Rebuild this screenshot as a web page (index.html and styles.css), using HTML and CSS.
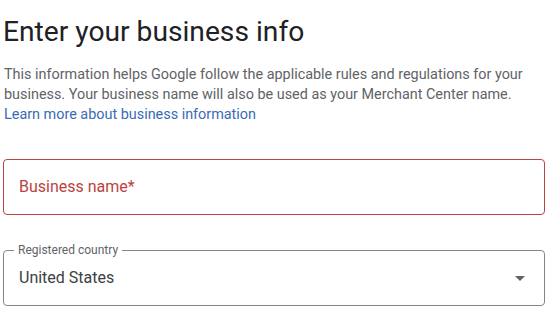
FILE: index.html
```html
<!DOCTYPE html>
<html lang="en">
<head>
<meta charset="utf-8">
<title>Enter your business info</title>
<link rel="stylesheet" href="styles.css">
</head>
<body>
<main class="page">
  <h1 class="title">Enter your business info</h1>
  <p class="intro">This information helps Google follow the applicable rules and regulations for your business. Your business name will also be used as your Merchant Center name. <a class="link" href="#">Learn more about business information</a></p>
  <div class="field field-error">
    <span class="field-label">Business name*</span>
  </div>
  <fieldset class="select">
    <legend class="select-legend">Registered country</legend>
    <div class="select-row">
      <span class="select-value">United States</span>
      <svg class="select-arrow" width="10" height="5" viewBox="0 0 10 5" aria-hidden="true"><path d="M0 0h10L5 5z" fill="#5f6368"/></svg>
    </div>
  </fieldset>
</main>
</body>
</html>
```

FILE: styles.css
```css
html, body {
  margin: 0;
  padding: 0;
  background: #ffffff;
}

.page {
  display: flex;
  flex-direction: column;
  padding: 0 2px 0 3px;
  font-family: Roboto, "Liberation Sans", sans-serif;
}

.title {
  margin: 14px 0 0 0;
  font-family: Roboto, "Liberation Sans", sans-serif;
  font-size: 28.2px;
  line-height: 36px;
  font-weight: 400;
  color: #202124;
}

.intro {
  margin: 15px 0 0 1px;
  font-size: 14.4px;
  line-height: 20px;
  color: #5f6368;
}

.link {
  display: block;
  color: #3a6bb5;
  text-decoration: none;
}

.field {
  margin-top: 34px;
  height: 56px;
  box-sizing: border-box;
  border: 1px solid #bb4340;
  border-radius: 4px;
  display: flex;
  align-items: center;
  padding: 0 15px;
}

.field-label {
  font-size: 16px;
  line-height: 24px;
  color: #bb4340;
}

.select {
  margin: 27px 0 0 0;
  padding: 0;
  border: 1px solid #80868b;
  border-radius: 4px;
  min-width: 0;
}

.select-legend {
  margin-left: 10px;
  padding: 0 4px;
  font-size: 12px;
  line-height: 16px;
  color: #5f6368;
}

.select-row {
  display: flex;
  align-items: center;
  justify-content: space-between;
  padding: 8px 19px 15px 15px;
}

.select-value {
  font-size: 16px;
  line-height: 24px;
  color: #3c4043;
}

.select-arrow {
  display: block;
}
```
